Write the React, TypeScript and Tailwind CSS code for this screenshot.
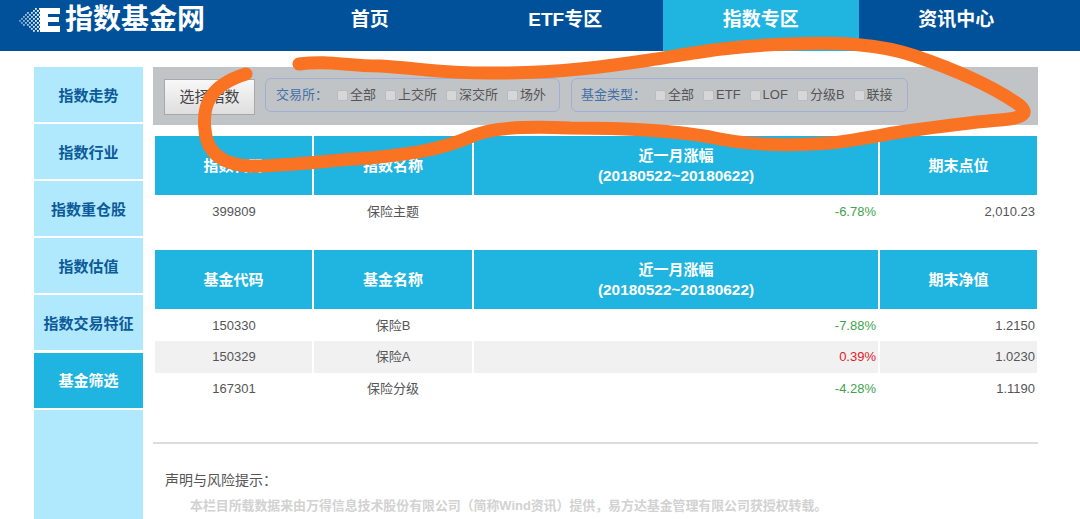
import React from 'react';

const font = { fontFamily: '"Liberation Sans", "Noto Sans CJK SC", sans-serif' };

const navItems = [
  { label: '首页' },
  { label: 'ETF专区' },
  { label: '指数专区', active: true },
  { label: '资讯中心' },
];

const sideItems = ['指数走势', '指数行业', '指数重仓股', '指数估值', '指数交易特征'];

const Logo = () => {
  // checker fade on the left of the E
  const dots: React.ReactNode[] = [];
  for (let x = 0; x < 11; x++) {
    for (let y = 0; y < 12; y++) {
      if ((x + y) % 2 === 0 && Math.abs(y - 5.5) < 1.5 + x * 0.6) {
        dots.push(<rect key={`${x}-${y}`} x={x * 2} y={1 + y * 2} width={1.8} height={1.8} fill="#fff" opacity={0.45 + x * 0.055} />);
      }
    }
  }
  return (
    <svg width="41" height="26" viewBox="0 0 41 26" className="shrink-0">
      {dots}
      <path d="M21 1h20v6H29v3h11v5H29v4h12v6H21z" fill="#fff" />
    </svg>
  );
};

const Check = ({ label }: { label: string }) => (
  <span className="flex items-center gap-[2px]">
    <span className="w-[11px] h-[11px] rounded-[2px] bg-[#d6d7d9] border border-[#b9bbbe]" />
    <span>{label}</span>
  </span>
);

const HeadCell = ({ children }: { children: React.ReactNode }) => (
  <div className="bg-[#1fb5e0] pt-[1px] flex flex-col items-center justify-center text-white font-bold text-[15px] leading-[20px] text-center">
    {children}
  </div>
);

const cols = 'grid grid-cols-[157px_158px_404px_157px] gap-x-[2px]';

const Row = ({ cells, color, shaded }: { cells: string[]; color: string; shaded?: boolean }) => {
  const bg = shaded ? 'bg-[#f1f1f1]' : 'bg-white';
  return (
    <div className={`${cols} h-[31.5px] text-[13px] text-[#555]`}>
      <div className={`${bg} flex items-center justify-center pl-[1px]`}>{cells[0]}</div>
      <div className={`${bg} flex items-center justify-center`}>{cells[1]}</div>
      <div className={`${bg} flex items-center justify-end pr-[2px] ${color}`}>{cells[2]}</div>
      <div className={`${bg} flex items-center justify-end pr-[2px]`}>{cells[3]}</div>
    </div>
  );
};

const App = () => {
  return (
    <div className="relative w-[1080px] h-[519px] overflow-hidden bg-white" style={font}>
      <header className="h-[51px] bg-[#00519a] flex">
        <div className="w-[272px] pl-[19px] pb-[11px] flex items-center gap-[5px] text-white">
          <Logo />
          <span className="text-[28px] leading-none font-bold">指数基金网</span>
        </div>
        <nav className="flex">
          {navItems.map((item) => (
            <div
              key={item.label}
              className={`w-[195.5px] pb-[11px] flex items-center justify-center text-white font-bold text-[19px] ${item.active ? 'bg-[#1fb5e0]' : ''}`}
            >
              {item.label}
            </div>
          ))}
        </nav>
      </header>

      <div className="flex pl-[34px] pt-[16px] gap-[10px]">
        <aside className="w-[109px] h-[500px] flex flex-col gap-[2px]">
          {sideItems.map((s) => (
            <div key={s} className="h-[55px] pt-[4px] shrink-0 bg-[#b0e8fe] flex items-center justify-center text-[#0d5a99] font-bold text-[15px]">
              {s}
            </div>
          ))}
          <div className="h-[55px] pt-[2px] mt-[1px] shrink-0 bg-[#1fb5e0] flex items-center justify-center text-white font-bold text-[15px]">
            基金筛选
          </div>
          <div className="flex-1 bg-[#b0e8fe]" />
        </aside>

        <main className="w-[885px]">
          <div className="h-[58px] bg-[#c1c4c7] flex items-start pt-[12px] pl-[11px] text-[13px] text-[#555]">
            <button className="w-[91px] h-[36px] bg-gradient-to-b from-[#f8f8f8] to-[#dedede] border border-[#a8a8a8] text-[15px] text-[#444]">
              选择指数
            </button>
            <div className="ml-[10px] w-[295px] h-[34px] -mt-[1px] border border-[#a3aed6] rounded-[6px] flex items-center pl-[10px] gap-[9px]">
              <span className="w-[52px] text-[#4270a8] whitespace-nowrap">交易所：</span>
              <Check label="全部" />
              <Check label="上交所" />
              <Check label="深交所" />
              <Check label="场外" />
            </div>
            <div className="ml-[11px] w-[337px] h-[34px] -mt-[1px] border border-[#a3aed6] rounded-[6px] flex items-center pl-[9px] gap-[9px]">
              <span className="w-[65px] text-[#4270a8] whitespace-nowrap">基金类型：</span>
              <Check label="全部" />
              <Check label="ETF" />
              <Check label="LOF" />
              <Check label="分级B" />
              <Check label="联接" />
            </div>
          </div>

          <div className="pl-[2px] pt-[11px]">
            <div className={`${cols} h-[59px]`}>
              <HeadCell>指数代码</HeadCell>
              <HeadCell>指数名称</HeadCell>
              <HeadCell>
                <span>近一月涨幅</span>
                <span className="text-[15.4px]">(20180522~20180622)</span>
              </HeadCell>
              <HeadCell>期末点位</HeadCell>
            </div>
            <div className="pt-[1px]">
              <Row cells={['399809', '保险主题', '-6.78%', '2,010.23']} color="text-[#3fa34d]" />
            </div>

            <div className={`${cols} h-[59px] mt-[22px]`}>
              <HeadCell>基金代码</HeadCell>
              <HeadCell>基金名称</HeadCell>
              <HeadCell>
                <span>近一月涨幅</span>
                <span className="text-[15.4px]">(20180522~20180622)</span>
              </HeadCell>
              <HeadCell>期末净值</HeadCell>
            </div>
            <div className="pt-[1px]">
              <Row cells={['150330', '保险B', '-7.88%', '1.2150']} color="text-[#3fa34d]" />
              <Row cells={['150329', '保险A', '0.39%', '1.0230']} color="text-[#e0202a]" shaded />
              <Row cells={['167301', '保险分级', '-4.28%', '1.1190']} color="text-[#3fa34d]" />
            </div>
          </div>

          <div className="mt-[38px] border-t-2 border-[#dcdcdc] pl-[12px] pt-[26px]">
            <p className="text-[14px] leading-[20px] text-[#555]">声明与风险提示：</p>
            <p className="mt-[7px] pl-[25px] text-[12.9px] leading-[18px] font-bold text-[#d2d2d2] whitespace-nowrap">
              本栏目所载数据来由万得信息技术股份有限公司（简称Wind资讯）提供，易方达基金管理有限公司获授权转载。
            </p>
          </div>
        </main>
      </div>

      {/* hand-drawn marker annotation over the page */}
      <svg className="absolute inset-0 pointer-events-none" width="1080" height="519" viewBox="0 0 1080 519">
        <path
          d="M299 64 C330 60 345 66 380 66 C420 68 440 74 500 73 C560 73 610 66 650 60 C700 52 730 46 790 44 C840 42 880 44 915 56 C950 68 985 82 1015 102 C1032 113 1024 118 1000 120 C970 122 930 128 900 132 C870 137 850 141 830 143 C790 146 750 146 710 137 C670 130 620 128 570 128 C520 126 490 128 470 137 C440 150 410 154 370 158 C330 160 290 166 250 166 C225 165 207 155 205 130 C202 105 210 85 246 74"
          fill="none"
          stroke="#f97322"
          strokeWidth="13"
          strokeLinecap="round"
          strokeLinejoin="round"
        />
      </svg>
    </div>
  );
};

export default App;
